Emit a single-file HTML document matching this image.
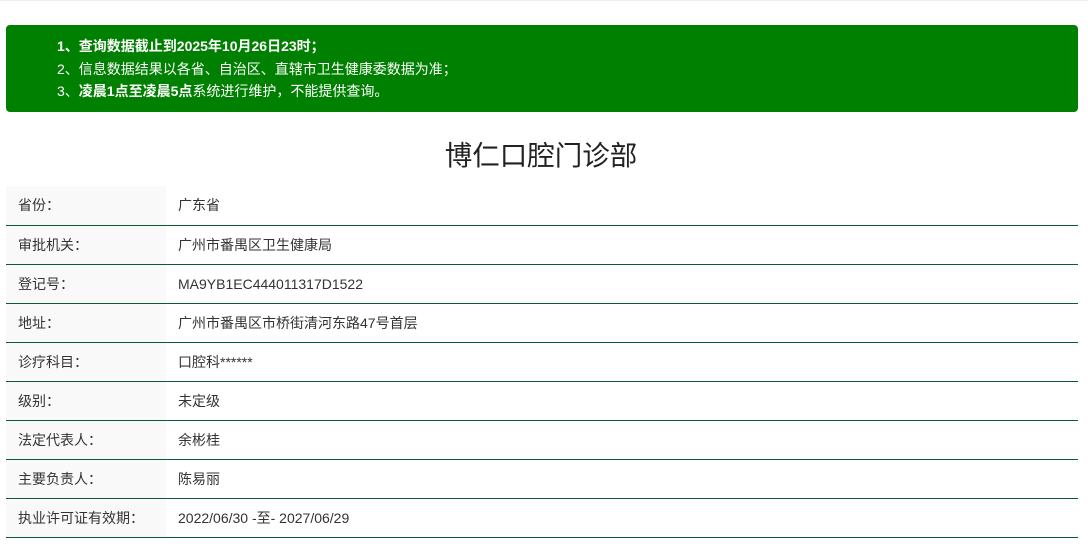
<!DOCTYPE html>
<html><head><meta charset="utf-8"><style>
*{margin:0;padding:0;box-sizing:border-box}
html,body{width:1088px;height:549px;overflow:hidden;background:#fff}
body{font-family:"Liberation Sans","Noto Sans CJK SC",sans-serif;color:#333;border-top:1px solid #eee}
.notice{position:absolute;left:6px;top:25px;width:1072px;height:87px;background:#008000;border-radius:4px;color:#fff;font-size:14px;padding:10px 0 0 51px}
.notice div{height:22.5px;line-height:22px}
.b{font-weight:bold}
h1{position:absolute;top:136px;left:0;width:1082px;text-align:center;font-size:27.5px;font-weight:normal;color:#222;line-height:40px}
table{position:absolute;left:6px;top:186px;width:1072px;border-collapse:collapse;font-size:14px}
td{height:39px;border-bottom:1px solid #0b5a32;vertical-align:middle;padding-top:0}
td.l{width:160px;background:#f9f9f9;padding-left:12px}
td.v{padding-left:12px}
</style></head><body>
<div class="notice">
<div class="b">1、查询数据截止到2025年10月26日23时；</div>
<div>2、信息数据结果以各省、自治区、直辖市卫生健康委数据为准；</div>
<div>3、<span class="b">凌晨1点至凌晨5点</span>系统进行维护，不能提供查询。</div>
</div>
<h1>博仁口腔门诊部</h1>
<table>
<tr><td class="l">省份：</td><td class="v">广东省</td></tr>
<tr><td class="l">审批机关：</td><td class="v">广州市番禺区卫生健康局</td></tr>
<tr><td class="l">登记号：</td><td class="v">MA9YB1EC444011317D1522</td></tr>
<tr><td class="l">地址：</td><td class="v">广州市番禺区市桥街清河东路47号首层</td></tr>
<tr><td class="l">诊疗科目：</td><td class="v">口腔科******</td></tr>
<tr><td class="l">级别：</td><td class="v">未定级</td></tr>
<tr><td class="l">法定代表人：</td><td class="v">余彬桂</td></tr>
<tr><td class="l">主要负责人：</td><td class="v">陈易丽</td></tr>
<tr><td class="l">执业许可证有效期：</td><td class="v">2022/06/30 -至- 2027/06/29</td></tr>
</table>
</body></html>
